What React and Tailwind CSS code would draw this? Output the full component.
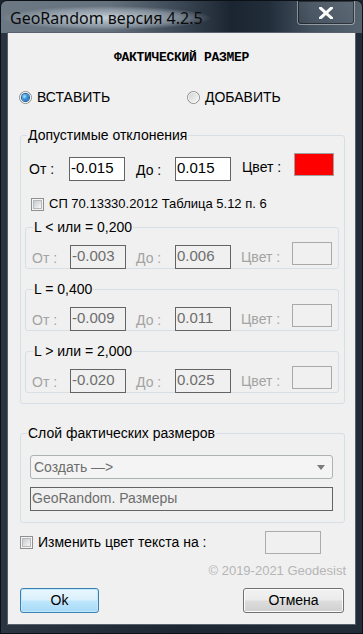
const Radio = ({ checked }) => (
  <span className="w-[13px] h-[13px] shrink-0 rounded-full border border-[#8b8d8f] bg-[linear-gradient(135deg,#cfd0d1,#fbfbfb)] flex items-center justify-center">
    <span className="w-[11px] h-[11px] rounded-full border border-[#f4f4f4] flex items-center justify-center">
      {checked && (
        <span className="w-[7px] h-[7px] rounded-full bg-[radial-gradient(circle_at_35%_35%,#a7e2ff_0%,#3c9be0_40%,#0c4f92_100%)] shadow-[0_0_0_1px_#1a5c9c]" />
      )}
    </span>
  </span>
);

const Check = () => (
  <span className="w-[13px] h-[13px] shrink-0 border border-[#8f8f8f] bg-[#f4f4f4] p-[1px] flex">
    <span className="flex-1 border border-[#b6b9bc] bg-[linear-gradient(135deg,#c8cacc,#f6f6f6)]" />
  </span>
);

const Input = ({ value, disabled }) => (
  <div
    className={
      "w-[56px] h-[24px] shrink-0 border border-[#646464] pl-[1px] text-[15px] leading-[20px] " +
      (disabled ? "bg-[#f0f0f0] text-[#6d6d6d]" : "bg-white text-black")
    }
  >
    {value}
  </div>
);

const SubGroup = ({ title, a, b, first }) => (
  <fieldset
    className={
      "ml-[4px] w-[314px] border border-[#d5dfe5] rounded-[3px] " + (first ? "mt-[7px]" : "mt-[12px]")
    }
  >
    <legend className="ml-[7px] px-[1px] text-[14px] leading-[16px] text-black">{title}</legend>
    <div className="mt-[10px] -mb-[1px] h-[24px] flex items-center pl-[6px] text-[14px] text-[#a3a3a3]">
      <span className="w-[38px] pt-[3px]">От :</span>
      <Input value={a} disabled />
      <span className="ml-[10px] w-[39px] pt-[3px]">До :</span>
      <Input value={b} disabled />
      <span className="ml-[10px] w-[51px] pt-[1px]">Цвет :</span>
      <span className="w-[40px] h-[23px] self-start -mt-[3px] border border-[#a9a9a9] bg-[#f0f0f0]" />
    </div>
  </fieldset>
);

export default function App() {
  return (
    <div className="w-[363px] h-[634px] bg-[#1b2430] font-['Liberation_Sans',Arial,sans-serif] text-black">
      <div className="w-full h-full flex flex-col rounded-t-[7px] border border-[#0c1117] overflow-hidden bg-[linear-gradient(90deg,#2a3541_0%,#1d2733_50%,#222c38_100%)]">
        {/* title bar */}
        <div className="h-[32px] shrink-0 flex items-start bg-[linear-gradient(90deg,#6c7884_0%,#64707c_30%,#3a4653_50%,#1b2531_64%,#222d3a_74%,#44515f_86%,#56636f_100%)]">
          <span className="ml-[0px] mt-[5px] px-[9px] h-[24px] leading-[24px] text-[16px] font-['Noto_Sans',sans-serif] text-[#0a0a0a] rounded-[12px] bg-[radial-gradient(closest-side,rgba(215,224,232,0.85),rgba(170,182,193,0.55)_70%,rgba(150,160,170,0)_100%)]">
            GeoRandom версия 4.2.5
          </span>
          <div className="ml-auto mr-[7px] w-[58px] h-[24px] rounded-b-[4px] border-x border-b border-[rgba(255,255,255,0.38)] shadow-[inset_0_0_0_1px_rgba(0,0,0,0.45)] bg-[linear-gradient(180deg,rgba(255,255,255,0.06),rgba(255,255,255,0.02))] flex items-center justify-center">
            <svg width="14" height="12" viewBox="0 0 14 12">
              <path d="M1.5 1 L12.5 11 M12.5 1 L1.5 11" stroke="#ffffff" strokeWidth="3" strokeLinecap="square" />
            </svg>
          </div>
        </div>

        {/* client */}
        <div className="mx-[7px] h-[591px] shrink-0 bg-[#f0f0f0] shadow-[0_0_0_1px_#56616d] flex flex-col">
          <div className="mt-[17px] h-[16px] leading-[16px] text-center font-['Liberation_Mono',monospace] font-bold text-[13px] tracking-[-0.3px]">
            ФАКТИЧЕСКИЙ РАЗМЕР
          </div>

          <div className="mt-[23px] h-[16px] flex items-center text-[14px]">
            <div className="ml-[11px] w-[168px] flex items-center">
              <Radio checked />
              <span className="ml-[5px]">ВСТАВИТЬ</span>
            </div>
            <div className="flex items-center">
              <Radio />
              <span className="ml-[5px]">ДОБАВИТЬ</span>
            </div>
          </div>

          <fieldset className="mt-[22px] ml-[12px] w-[325px] border border-[#d5dfe5] rounded-[3px] pb-[10px]">
            <legend className="ml-[6px] px-[1px] text-[14px] leading-[16px]">Допустимые отклонения</legend>
            <div className="mt-[14px] h-[24px] flex items-center pl-[8px] text-[14px]">
              <span className="w-[40px] pt-[1px]">От :</span>
              <Input value="-0.015" />
              <span className="ml-[11px] w-[39px] pt-[3px]">До :</span>
              <Input value="0.015" />
              <span className="ml-[11px] w-[52px] -mt-[3px]">Цвет :</span>
              <span className="w-[40px] h-[23px] self-start -mt-[4px] border border-[#a0a0a0] bg-[#ff0000]" />
            </div>
            <div className="mt-[15px] h-[16px] flex items-center pl-[10px] text-[13px]">
              <Check />
              <span className="ml-[5px]">СП 70.13330.2012 Таблица 5.12 п. 6</span>
            </div>
            <SubGroup first title="L < или = 0,200" a="-0.003" b="0.006" />
            <SubGroup title="L = 0,400" a="-0.009" b="0.011" />
            <SubGroup title="L > или = 2,000" a="-0.020" b="0.025" />
          </fieldset>

          <fieldset className="mt-[21px] ml-[12px] w-[325px] border border-[#d5dfe5] rounded-[3px] pb-[11px]">
            <legend className="ml-[6px] px-[1px] text-[14px] leading-[16px]">Слой фактических размеров</legend>
            <div className="mt-[14px] ml-[9px] w-[303px] h-[24px] rounded-[3px] border border-[#adb2b5] bg-[#f4f4f4] flex items-center pl-[3px] pr-[7px] text-[14px] text-[#6d6d6d]">
              <span className="flex-1">Создать —&gt;</span>
              <svg width="8" height="5" viewBox="0 0 8 5">
                <path d="M0 0 H8 L4 5 Z" fill="#7a7a7a" />
              </svg>
            </div>
            <div className="mt-[8px] ml-[9px] w-[303px] h-[24px] border border-[#646464] bg-[#f0f0f0] pl-[1px] text-[14px] leading-[20px] text-[#6d6d6d]">
              GeoRandom. Размеры
            </div>
          </fieldset>

          <div className="mt-[7px] h-[24px] flex items-center text-[14px]">
            <div className="ml-[12px] w-[245px] flex items-center">
              <Check />
              <span className="ml-[5px]">Изменить цвет текста на :</span>
            </div>
            <span className="w-[56px] h-[23px] border border-[#acacac] bg-[#f0f0f0]" />
          </div>

          <div className="mt-[9px] h-[16px] leading-[16px] text-right pr-[9px] text-[13px] text-[#b5b5b5]">
            © 2019-2021 Geodesist
          </div>

          <div className="mt-[9px] flex items-center justify-between pl-[12px] pr-[11px]">
            <div className="w-[79px] h-[25px] rounded-[3px] border border-[#3c7fb1] shadow-[inset_0_0_0_1px_#bfe9fd] bg-[linear-gradient(180deg,#eaf6fd_0%,#d9f0fc_48%,#bee6fd_52%,#a7d9f5_100%)] flex items-center justify-center text-[14px]">
              Ok
            </div>
            <div className="w-[101px] h-[25px] rounded-[3px] border border-[#707070] shadow-[inset_0_0_0_1px_#fcfcfc] bg-[linear-gradient(180deg,#f2f2f2_0%,#ebebeb_48%,#dddddd_52%,#cfcfcf_100%)] flex items-center justify-center text-[14px]">
              Отмена
            </div>
          </div>
        </div>
      </div>
    </div>
  );
}
